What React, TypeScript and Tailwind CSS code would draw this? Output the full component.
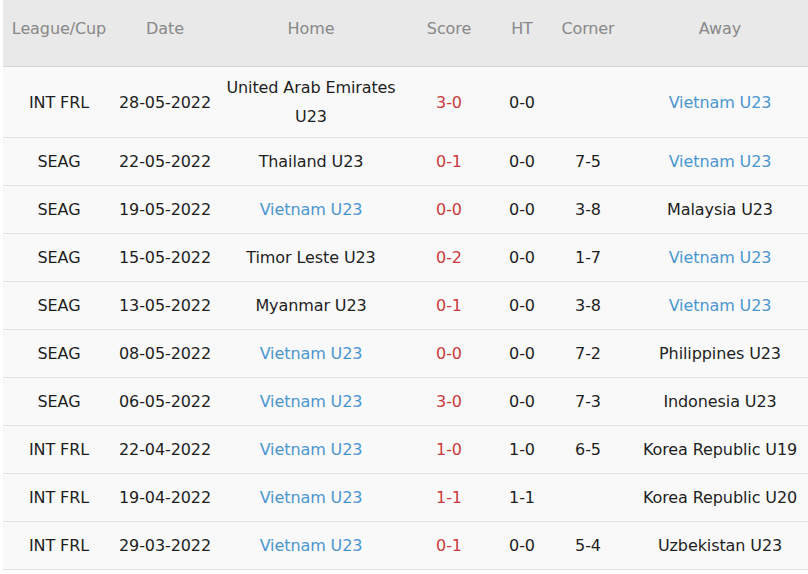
const rows = [
  { lg: "INT FRL", date: "28-05-2022", home: "United Arab Emirates U23", score: "3-0", ht: "0-0", corner: "", away: "Vietnam U23", homeVn: false, tall: true },
  { lg: "SEAG", date: "22-05-2022", home: "Thailand U23", score: "0-1", ht: "0-0", corner: "7-5", away: "Vietnam U23", homeVn: false },
  { lg: "SEAG", date: "19-05-2022", home: "Vietnam U23", score: "0-0", ht: "0-0", corner: "3-8", away: "Malaysia U23", homeVn: true },
  { lg: "SEAG", date: "15-05-2022", home: "Timor Leste U23", score: "0-2", ht: "0-0", corner: "1-7", away: "Vietnam U23", homeVn: false },
  { lg: "SEAG", date: "13-05-2022", home: "Myanmar U23", score: "0-1", ht: "0-0", corner: "3-8", away: "Vietnam U23", homeVn: false },
  { lg: "SEAG", date: "08-05-2022", home: "Vietnam U23", score: "0-0", ht: "0-0", corner: "7-2", away: "Philippines U23", homeVn: true },
  { lg: "SEAG", date: "06-05-2022", home: "Vietnam U23", score: "3-0", ht: "0-0", corner: "7-3", away: "Indonesia U23", homeVn: true },
  { lg: "INT FRL", date: "22-04-2022", home: "Vietnam U23", score: "1-0", ht: "1-0", corner: "6-5", away: "Korea Republic U19", homeVn: true },
  { lg: "INT FRL", date: "19-04-2022", home: "Vietnam U23", score: "1-1", ht: "1-1", corner: "", away: "Korea Republic U20", homeVn: true },
  { lg: "INT FRL", date: "29-03-2022", home: "Vietnam U23", score: "0-1", ht: "0-0", corner: "5-4", away: "Uzbekistan U23", homeVn: true },
];

const cols = "grid grid-cols-[112px_100px_192px_84px_62px_70px_194px] w-[814px]";

export default function App() {
  return (
    <div className="w-[808px] h-[574px] overflow-hidden bg-white pl-[3px] text-[16px] text-[#1e1e1e]" style={{ fontFamily: '"DejaVu Sans", Verdana, sans-serif' }}>
      <div className={`${cols} h-[67px] bg-[#e9e9e9] border-b border-[#d4d4d4] text-[#888] items-center text-center tracking-[-0.1px]`}>
        <div className="pb-[8px]">League/Cup</div>
        <div className="pb-[8px]">Date</div>
        <div className="pb-[8px]">Home</div>
        <div className="pb-[8px]">Score</div>
        <div className="pb-[8px]">HT</div>
        <div className="pb-[8px]">Corner</div>
        <div className="pb-[8px]">Away</div>
      </div>
      {rows.map((r, i) => (
        <div
          key={i}
          className={`${cols} ${r.tall ? "h-[71px]" : "h-[48px]"} bg-[#f9f9f9] border-b border-[#e3e3e3] items-center text-center leading-[29px] tracking-[-0.1px]`}
        >
          <div>{r.lg}</div>
          <div>{r.date}</div>
          <div className={`px-[10px] ${r.homeVn ? "text-[#4b96cf]" : ""}`}>{r.home}</div>
          <div className="text-[#c9393d]">{r.score}</div>
          <div>{r.ht}</div>
          <div>{r.corner}</div>
          <div className={`${r.homeVn ? "" : "text-[#4b96cf]"}`}>{r.away}</div>
        </div>
      ))}
    </div>
  );
}
